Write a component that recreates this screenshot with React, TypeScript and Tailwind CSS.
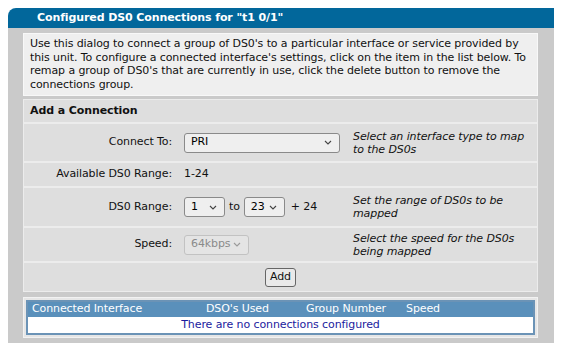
import React from "react";

const font = { fontFamily: '"DejaVu Sans", Verdana, sans-serif', letterSpacing: "-0.1px" };

function Chevron({ color = "#444" }: { color?: string }) {
  return (
    <svg width="8" height="5" viewBox="0 0 8 5" className="shrink-0">
      <path d="M1 1 L4 4 L7 1" fill="none" stroke={color} strokeWidth="1.1" />
    </svg>
  );
}

function Select({ value, w, disabled }: { value: string; w: string; disabled?: boolean }) {
  return (
    <div
      className={`${w} h-[20px] rounded-[3px] border flex items-center justify-between pl-[6px] pr-[7px] ${
        disabled ? "border-[#c2c2c2] bg-[#e4e4e4] text-[#8a8a8a]" : "border-[#8a8a8a] bg-[#efefef] text-black"
      }`}
    >
      <span>{value}</span>
      <Chevron color={disabled ? "#9a9a9a" : "#444"} />
    </div>
  );
}

function Row({
  label,
  children,
  desc,
  h,
}: {
  label: string;
  children: React.ReactNode;
  desc?: string;
  h: string;
}) {
  return (
    <div className={`flex items-center ${h} border-t-2 border-[#ececec]`}>
      <div className="w-[160px] text-right pr-[12px] whitespace-nowrap">{label}</div>
      <div className="w-[169px] flex items-center">{children}</div>
      <div className="flex-1 italic leading-[13px] pr-[4px]">{desc}</div>
    </div>
  );
}

export default function App() {
  return (
    <div className="w-[565px] h-[357px] bg-white pt-[8px] pl-[8px] text-[11px] text-[#111]" style={font}>
      <div className="w-[546px]">
        <div className="h-[20px] bg-[#02679b] rounded-tl-[8px] flex items-center pl-[29px] text-white font-bold">
          Configured DS0 Connections for "t1 0/1"
        </div>
        <div className="bg-[#cacaca] pt-[5px] pb-[5px] pl-[15px] pr-[16px]">
          <div className="bg-[#efefef] border border-[#f8f8f8] px-[6px] pt-[3px] pb-[4px] leading-[13.5px]">
            Use this dialog to connect a group of DS0's to a particular interface or service provided by this unit.
            To configure a connected interface's settings, click on the item in the list below. To remap a group of
            DS0's that are currently in use, click the delete button to remove the connections group.
          </div>

          <div className="mt-[3px] bg-[#dedede] border border-[#ececec]">
            <div className="h-[22px] flex items-center pl-[6px] font-bold">Add a Connection</div>
            <Row label="Connect To:" h="h-[39px]" desc="Select an interface type to map to the DS0s">
              <Select value="PRI" w="w-[156px]" />
            </Row>
            <Row label="Available DS0 Range:" h="h-[25px]">
              <span>1-24</span>
            </Row>
            <Row label="DS0 Range:" h="h-[40px]" desc="Set the range of DS0s to be mapped">
              <Select value="1" w="w-[41px]" />
              <span className="px-[4px]">to</span>
              <Select value="23" w="w-[41px]" />
              <span className="pl-[6px]">+ 24</span>
            </Row>
            <Row label="Speed:" h="h-[35px]" desc="Select the speed for the DS0s being mapped">
              <Select value="64kbps" w="w-[65px]" disabled />
            </Row>
            <div className="h-[30px] border-t-2 border-[#ececec] flex items-center justify-center">
              <div className="h-[19px] px-[4px] border border-[#666] rounded-[3px] bg-[#e9e9e9] flex items-center">
                Add
              </div>
            </div>
          </div>

          <div className="mt-[5px] bg-[#e6e6e6] p-[2px] border border-[#f2f2f2]">
            <div className="border-2 border-[#6b93b6]">
              <div className="h-[15px] bg-[#5a90bb] text-white flex items-center">
                <span className="w-[178px] pl-[4px]">Connected Interface</span>
                <span className="w-[100px]">DSO's Used</span>
                <span className="w-[100px]">Group Number</span>
                <span>Speed</span>
              </div>
              <div className="h-[16px] bg-white text-[#1b1b9e] flex items-center justify-center">
                There are no connections configured
              </div>
            </div>
          </div>
        </div>
      </div>
    </div>
  );
}
